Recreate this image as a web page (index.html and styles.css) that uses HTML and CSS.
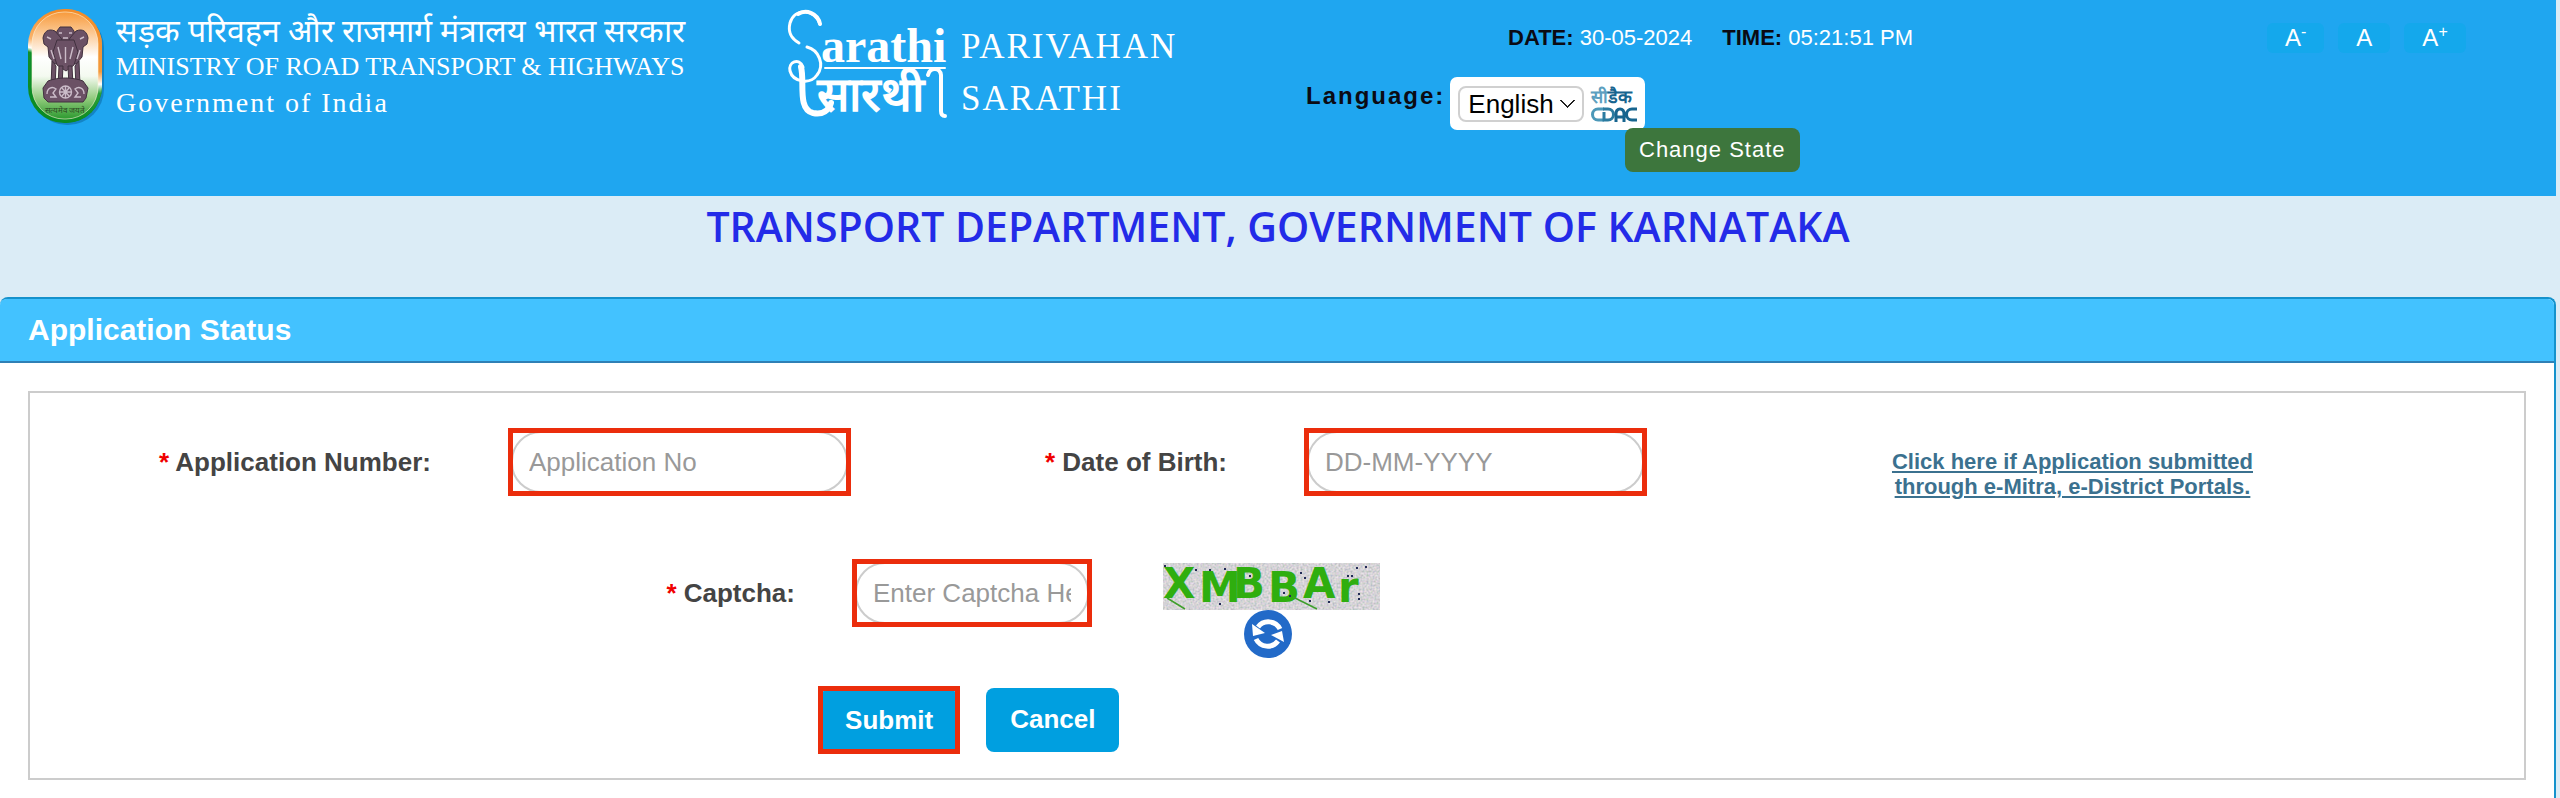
FILE: index.html
```html
<!DOCTYPE html>
<html lang="en">
<head>
    <meta charset="UTF-8">
    <meta name="viewport" content="width=device-width, initial-scale=1.0">
    <title>Application Status</title>
    <link rel="stylesheet" href="styles.css">
</head>
<body>

    <header class="top-header">
        <!-- Ministry branding -->
        <div class="ministry">
            <svg class="emblem" viewBox="0 0 76 116" role="img" aria-label="Emblem of India">
                <defs>
                    <linearGradient id="flag" x1="0" y1="0" x2="0" y2="1">
                        <stop offset="0" stop-color="#f79a3c"/>
                        <stop offset=".18" stop-color="#fbc58c"/>
                        <stop offset=".42" stop-color="#ffffff"/>
                        <stop offset=".6" stop-color="#f4faf0"/>
                        <stop offset=".82" stop-color="#8cc878"/>
                        <stop offset="1" stop-color="#2c9a2f"/>
                    </linearGradient>
                    <linearGradient id="rim" x1=".2" y1="0" x2="0" y2="1">
                        <stop offset="0" stop-color="#f28c28"/>
                        <stop offset=".28" stop-color="#fbb36a"/>
                        <stop offset=".36" stop-color="#ffffff"/>
                        <stop offset=".4" stop-color="#0f8f2c"/>
                        <stop offset="1" stop-color="#0a8a20"/>
                    </linearGradient>
                    <linearGradient id="rimRight" x1="0" y1="0" x2="0" y2="1">
                        <stop offset="0" stop-color="#f28c28"/>
                        <stop offset=".55" stop-color="#f39a3c"/>
                        <stop offset=".66" stop-color="#ffffff"/>
                        <stop offset=".74" stop-color="#2da13a"/>
                        <stop offset="1" stop-color="#0a8a20"/>
                    </linearGradient>
                </defs>
                <rect x="3" y="3" width="73" height="113" rx="36" fill="#1384c6"/>
                <rect x="0" y="0" width="74" height="114" rx="36" fill="url(#rim)"/>
                <path d="M37 0a37 37 0 0 1 37 37v41a37 37 0 0 1-37 36z" fill="url(#rimRight)"/>
                <rect x="4" y="3" width="66" height="107" rx="32" fill="url(#flag)" stroke="#fff3d8" stroke-opacity=".6"/>
                <!-- lion capital -->
                <g fill="#6b5165" stroke="#41313f" stroke-width="1">
                    <path d="M29 22l3-4h11l3 4 1 6-3 5H31l-3-5z"/>
                    <path d="M27 22c-7-3-11 1-12 7l1 6 4 3 1 10 6 7 8-2 2-16-4-8z"/>
                    <path d="M48 22c7-3 11 1 12 7l-1 6-4 3-1 10-6 7-8-2-2-16 4-8z"/>
                    <path d="M29 31h17l4 12-4 13-8 6-9-6-4-13z"/>
                    <path d="M24 52l4 5-1 20h-4zM51 52l-4 5 1 20h4zM31 57h4l-1 20h-4zM44 57h-4l1 20h4z"/>
                    <path d="M20 72c10-4 25-4 35 0l5 7-2 10-3 4H20l-4-4-1-10z"/>
                </g>
                <g fill="none" stroke="#cbbcc9" stroke-width="1.4">
                    <circle cx="37.500" cy="83" r="6"/>
                    <path d="M32 83h11M37.500 77v12M34 79l7 8M41 79l-7 8"/>
                    <path d="M19 85c0-6 5-8 9-5l-3 4 3 4h-6M56 85c0-6-5-8-9-5l3 4-3 4h6"/>
                    <path d="M31 24h3M41 24h3M35 29h5M19 28l4 2M56 28l-4 2M30 38l3 12M45 38l-3 12M37.500 38v16M23 41l3 9M52 41l-3 9"/>
                </g>
                <text class="motto" x="37" y="104" text-anchor="middle">सत्यमेव जयते</text>
            </svg>
            <div class="ministry-text">
                <p class="hindi">सड़क परिवहन और राजमार्ग मंत्रालय भारत सरकार</p>
                <p class="name">MINISTRY OF ROAD TRANSPORT &amp; HIGHWAYS</p>
                <p class="govt">Government of India</p>
            </div>
        </div>

        <!-- Sarathi branding -->
        <div class="sarathi">
            <svg class="sarathi-logo" viewBox="0 0 162 110" role="img" aria-label="Sarathi">
                <text x="34" y="53">arathi</text>
                <text x="30" y="102">सारथी</text>
                <g fill="none" stroke="#fff" stroke-linecap="round">
                    <path stroke-width="3" d="M33 15C28 0 8-2 3 14c-3 12 4 17 9 20"/>
                    <path stroke-width="4" d="M11 5c8-5 20-1 22 10"/>
                    <path stroke-width="3" d="M20 38c12 3 18 18 10 28-7 10-24 7-27-4-2-9 9-14 13-4"/>
                    <path stroke-width="6" d="M14 58c4 14-4 42 12 46 10 2 16-3 18-10"/>
                    <path stroke-width="2" d="M38 59h120"/>
                    <path stroke-width="4" d="M141 66c2-8 12-8 13 0v36q0 5 4 5"/>
                </g>
            </svg>
            <div class="sarathi-text">
                <p>PARIVAHAN</p>
                <p>SARATHI</p>
            </div>
        </div>

        <!-- Date, language and state -->
        <div class="settings">
            <p class="datetime">
                <span><b>DATE:</b> 30-05-2024</span>
                <span><b>TIME:</b> 05:21:51 PM</span>
            </p>
            <div class="language">
                <label for="language">Language:</label>
                <div class="language-box">
                    <select id="language">
                        <option>English</option>
                        <option>Hindi</option>
                    </select>
                    <svg class="cdac" viewBox="0 0 46 38" role="img" aria-label="CDAC">
                        <text class="cdac-hindi" x="0" y="18"><tspan fill="#5d9fc0">सी</tspan><tspan fill="#17658f">डैक</tspan></text>
                        <g fill="none" stroke-width="3">
                            <path stroke="#4b98b8" d="M13 24H7a5 5 0 0 0 0 11h6"/>
                            <path stroke="#2a7ba0" d="M13 27v8h4a5 5 0 0 0 0-11h-5"/>
                            <path stroke="#17658f" d="M25 37v-8q0-5 4-5t4 5v8M25 32h8M46 24h-5a5 5 0 0 0 0 11h5"/>
                        </g>
                    </svg>
                </div>
            </div>
            <button type="button" class="change-state">Change State</button>
        </div>

        <!-- Text size -->
        <div class="text-size">
            <button type="button">A<sup>-</sup></button>
            <button type="button">A</button>
            <button type="button">A<sup>+</sup></button>
        </div>
    </header>

    <h1 class="department">TRANSPORT DEPARTMENT, GOVERNMENT OF KARNATAKA</h1>

    <main class="panel">
        <h2 class="panel-heading">Application Status</h2>
        <div class="panel-body">
            <form class="status-form">
                <div class="row row-details">
                    <label for="appNo"><span class="required">*</span> Application Number:</label>
                    <div class="highlight"><input type="text" id="appNo" placeholder="Application No"></div>
                    <label for="dob"><span class="required">*</span> Date of Birth:</label>
                    <div class="highlight"><input type="text" id="dob" placeholder="DD-MM-YYYY"></div>
                    <a class="portal-link" href="#">Click here if Application submitted<br>through e-Mitra, e-District Portals.</a>
                </div>

                <div class="row row-captcha">
                    <label for="captcha"><span class="required">*</span> Captcha:</label>
                    <div class="highlight"><input type="text" id="captcha" placeholder="Enter Captcha Here"></div>
                    <div class="captcha-image">
                        <svg class="captcha-code" viewBox="0 0 217 47" role="img" aria-label="Captcha code">
                            <filter id="noise" x="0" y="0" width="100%" height="100%">
                                <feTurbulence type="fractalNoise" baseFrequency=".5" numOctaves="2" seed="4"/>
                                <feColorMatrix values="1 0 0 0 .18  .6 .4 0 0 .17  .6 0 .4 0 .19  0 0 0 0 1"/>
                            </filter>
                            <rect width="217" height="47" filter="url(#noise)"/>
                            <rect width="217" height="47" fill="#d2ced4" opacity=".35"/>
                            <g class="captcha-letters">
                                <text x="0" y="35">X</text>
                                <text x="36" y="39">M</text>
                                <text x="70" y="35">B</text>
                                <text x="105" y="39">B</text>
                                <text x="140" y="35">A</text>
                                <text x="175" y="39">r</text>
                            </g>
                            <path d="M4 35l18 11M130 34l24 12" stroke="#3f9f2c" stroke-width="1.500"/>
                            <path d="M1 3h2M32 7h2M46 7h2M61 6h2M86 13h2M56 41h2M120 30h2M126 33h2M146 38h2M137 10h2M141 15h2M165 39h2M184 13h2M188 13h2M193 5h2M202 4h2M195 31h2M195 36h2" stroke="#222a55" stroke-width="2"/>
                        </svg>
                        <button type="button" class="refresh" aria-label="Refresh captcha">
                            <svg viewBox="0 0 48 48">
                                <circle cx="24" cy="24" r="24" fill="#226ac8"/>
                                <path d="M36 19A13 13 0 0 0 14 17M12 29a13 13 0 0 0 22 2" fill="none" stroke="#fff" stroke-width="5"/>
                                <path d="M8 14l1 12 12-3zM40 32l-2-11-11 4z" fill="#fff"/>
                            </svg>
                        </button>
                    </div>
                </div>

                <div class="row row-actions">
                    <div class="highlight"><button type="submit" class="btn">Submit</button></div>
                    <button type="reset" class="btn">Cancel</button>
                </div>
            </form>
        </div>
    </main>

</body>
</html>
```
FILE: styles.css
```css
:root {
    --header-blue: #1fa6f0;
    --panel-blue: #43c2ff;
    --panel-border: #1592cc;
    --page-bg: #dbecf6;
    --button-blue: #009fe0;
    --highlight-red: #eb2d0c;
    --text-dark: #444444;
}

* {
    margin: 0;
    padding: 0;
    box-sizing: border-box;
}

body {
    display: flex;
    flex-direction: column;
    min-height: 100vh;
    padding-right: 4px;
    background-color: var(--page-bg);
    font-family: "Liberation Sans", Arial, sans-serif;
    font-size: 26px;
    color: var(--text-dark);
}

button,
input,
select {
    font: inherit;
}

/* Header */
.top-header {
    display: grid;
    grid-template-columns: 759fr 519fr 961fr 289fr;
    align-items: start;
    min-height: 196px;
    padding-left: 28px;
    background-color: var(--header-blue);
    color: #ffffff;
}

.ministry,
.sarathi {
    display: flex;
    gap: 12px;
    padding-top: 9px;
    font-family: "Liberation Serif", "Times New Roman", serif;
    white-space: nowrap;
}

.emblem {
    width: 76px;
    height: 116px;
}

.motto {
    font-size: 8px;
    fill: #2c4a22;
}

.ministry-text {
    padding-top: 4px;
    line-height: 36px;
}

.hindi {
    font-size: 32px;
}

.name {
    font-size: 26px;
}

.govt {
    font-size: 28px;
    letter-spacing: 2px;
}

.sarathi-logo {
    width: 162px;
    height: 110px;
    overflow: visible;
    font-size: 48px;
    font-weight: bold;
    fill: #ffffff;
}

.sarathi-text {
    padding-top: 12px;
    font-size: 35px;
    line-height: 52px;
    letter-spacing: 2px;
}

.datetime {
    display: flex;
    gap: 30px;
    padding: 24px 0 0 202px;
    font-size: 22px;
    line-height: 28px;
    white-space: nowrap;
}

.datetime b {
    color: #0b0b14;
}

.language {
    display: flex;
    gap: 5px;
    padding-top: 25px;
}

.language label {
    font-size: 24px;
    font-weight: bold;
    line-height: 38px;
    letter-spacing: 2px;
    color: #0b0b14;
}

.language-box {
    display: flex;
    align-items: center;
    gap: 7px;
    height: 53px;
    padding: 0 8px;
    border-radius: 7px;
    background: #ffffff;
}

.language-box select {
    appearance: none;
    width: 126px;
    height: 36px;
    padding-left: 8px;
    border: 2px solid #d0d0d0;
    border-radius: 8px;
    color: #000000;
    /* chevron drawn with two strokes */
    background:
        linear-gradient(45deg, transparent 46%, #222 46%, #222 60%, transparent 60%) right 14px center / 8px 8px no-repeat,
        linear-gradient(-45deg, transparent 46%, #222 46%, #222 60%, transparent 60%) right 7px center / 8px 8px no-repeat,
        #ffffff;
}

.cdac {
    width: 46px;
    height: 38px;
    overflow: visible;
}

.cdac-hindi {
    font-size: 18px;
    font-weight: bold;
}

.change-state {
    position: relative;
    display: block;
    height: 44px;
    margin: -2px 0 0 319px;
    padding: 0 14px;
    border: 0;
    border-radius: 8px;
    background: #3d763d;
    color: #ffffff;
    font-size: 22px;
    letter-spacing: 1px;
}

.text-size {
    display: flex;
    gap: 14px;
    padding-top: 23px;
}

.text-size button {
    height: 30px;
    padding: 0 18px;
    border: 0;
    border-radius: 6px;
    background: #14a8ec;
    color: #ffffff;
    font-size: 24px;
    line-height: 30px;
}

.text-size sup {
    font-size: 16px;
    line-height: 0;
}

/* Department title */
.department {
    padding: 0 0 41px;
    font-family: "Open Sans", sans-serif;
    font-size: 41px;
    font-weight: 600;
    line-height: 60px;
    text-align: center;
    color: #232be8;
}

/* Status panel */
.panel {
    display: flex;
    flex-direction: column;
    flex: 1;
    border: solid var(--panel-border);
    border-width: 2px 2px 0 0;
    border-radius: 8px 8px 0 0;
    background: #ffffff;
}

.panel-heading {
    padding: 0 28px;
    border-bottom: 2px solid #3080b5;
    border-radius: 6px 6px 0 0;
    background: var(--panel-blue);
    color: #ffffff;
    font-size: 30px;
    line-height: 62px;
}

.panel-body {
    flex: 1;
    padding: 28px 28px 16px;
}

.status-form {
    display: flex;
    flex-direction: column;
    border: 2px solid #cccccc;
    padding: 35px 0 24px;
}

.row {
    display: grid;
}

.row label {
    padding-right: 77px;
    font-weight: bold;
    line-height: 68px;
    text-align: right;
    white-space: nowrap;
}

.required {
    color: #f00000;
}

.row-details {
    grid-template-columns: 478fr 343fr 453fr 343fr 877fr;
}

.row-captcha {
    grid-template-columns: 822fr 240fr 1432fr;
    padding-top: 60px;
}

.row-captcha label {
    padding-right: 57px;
}

.row-actions {
    display: flex;
    align-items: center;
    gap: 26px;
    padding: 28px 0 0 31.6%;
}

.highlight {
    position: relative;
    height: 68px;
    padding: 3px;
}

.highlight::after {
    content: '';
    position: absolute;
    inset: 0;
    border: 5px solid var(--highlight-red);
    pointer-events: none;
}

.highlight input {
    width: 100%;
    height: 62px;
    padding: 0 16px;
    border: 2px solid #cccccc;
    border-radius: 30px;
    background: #ffffff;
}

.highlight input::placeholder {
    color: #999999;
    opacity: 1;
}

.portal-link {
    padding: 21px 26px 0 0;
    font-size: 22px;
    font-weight: bold;
    line-height: 25px;
    text-align: center;
    color: #3b718f;
}

.captcha-image {
    display: flex;
    flex-direction: column;
    width: 288px;
    padding: 4px 0 0 71px;
}

.captcha-code {
    width: 217px;
    height: 47px;
}

.captcha-letters {
    font-family: "DejaVu Sans", sans-serif;
    font-size: 42px;
    font-weight: bold;
    fill: #2fae0f;
}

.refresh {
    align-self: center;
    width: 48px;
    height: 48px;
    margin-right: 8px;
    border: 0;
    background: none;
    cursor: pointer;
}

.refresh svg {
    display: block;
}

.btn {
    height: 64px;
    padding: 0 24px 2px;
    border: 0;
    border-radius: 8px;
    background: var(--button-blue);
    color: #ffffff;
    font-weight: bold;
    cursor: pointer;
}
```
